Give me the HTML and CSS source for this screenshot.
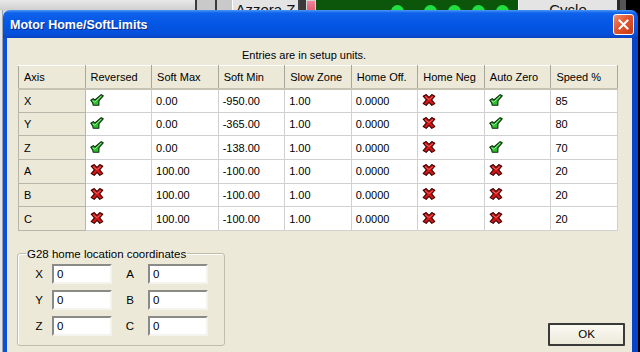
FILE: index.html
```html
<!DOCTYPE html>
<html lang="en">
<head>
    <meta charset="UTF-8">
    <title>Motor Home/SoftLimits</title>
    <link rel="stylesheet" href="styles.css">
</head>
<body>
    <!-- application behind the dialog -->
    <div class="desktop">
        <div class="bg-panel"></div>
        <div class="bg-sep"></div>
        <div class="bg-gap"></div>
        <div class="bg-sep"></div>
        <div class="bg-gap narrow"></div>
        <div class="bg-button">Azzera Z</div>
        <div class="bg-led"></div>
        <div class="bg-dro">
            <span class="dot first"></span>
            <span class="dot"></span>
            <span class="dot"></span>
            <span class="dot"></span>
            <span class="dot"></span>
        </div>
        <div class="bg-button wide">Cycle</div>
        <div class="bg-dark"></div>
    </div>

    <div class="stage">
        <div class="edge-left"></div>

        <div class="window">
            <div class="titlebar">
                <span class="title">Motor Home/SoftLimits</span>
                <button class="close" type="button">
                    <svg width="11" height="11" viewBox="0 0 11 11">
                        <path d="M1.5 1.5 L9.5 9.5 M9.5 1.5 L1.5 9.5" stroke="#ffffff" stroke-width="2" stroke-linecap="square"/>
                    </svg>
                </button>
            </div>

            <div class="frame">
                <p class="caption">Entries are in setup units.</p>

                <table class="limits">
                    <thead>
                        <tr>
                            <th>Axis</th>
                            <th>Reversed</th>
                            <th>Soft Max</th>
                            <th>Soft Min</th>
                            <th>Slow Zone</th>
                            <th>Home Off.</th>
                            <th>Home Neg</th>
                            <th>Auto Zero</th>
                            <th>Speed %</th>
                        </tr>
                    </thead>
                    <tbody>
                        <tr>
                            <td class="axis">X</td>
                            <td><svg class="ico"><use href="#yes"/></svg></td>
                            <td>0.00</td>
                            <td>-950.00</td>
                            <td>1.00</td>
                            <td>0.0000</td>
                            <td><svg class="ico"><use href="#no"/></svg></td>
                            <td><svg class="ico"><use href="#yes"/></svg></td>
                            <td>85</td>
                        </tr>
                        <tr>
                            <td class="axis">Y</td>
                            <td><svg class="ico"><use href="#yes"/></svg></td>
                            <td>0.00</td>
                            <td>-365.00</td>
                            <td>1.00</td>
                            <td>0.0000</td>
                            <td><svg class="ico"><use href="#no"/></svg></td>
                            <td><svg class="ico"><use href="#yes"/></svg></td>
                            <td>80</td>
                        </tr>
                        <tr>
                            <td class="axis">Z</td>
                            <td><svg class="ico"><use href="#yes"/></svg></td>
                            <td>0.00</td>
                            <td>-138.00</td>
                            <td>1.00</td>
                            <td>0.0000</td>
                            <td><svg class="ico"><use href="#no"/></svg></td>
                            <td><svg class="ico"><use href="#yes"/></svg></td>
                            <td>70</td>
                        </tr>
                        <tr>
                            <td class="axis">A</td>
                            <td><svg class="ico"><use href="#no"/></svg></td>
                            <td>100.00</td>
                            <td>-100.00</td>
                            <td>1.00</td>
                            <td>0.0000</td>
                            <td><svg class="ico"><use href="#no"/></svg></td>
                            <td><svg class="ico"><use href="#no"/></svg></td>
                            <td>20</td>
                        </tr>
                        <tr>
                            <td class="axis">B</td>
                            <td><svg class="ico"><use href="#no"/></svg></td>
                            <td>100.00</td>
                            <td>-100.00</td>
                            <td>1.00</td>
                            <td>0.0000</td>
                            <td><svg class="ico"><use href="#no"/></svg></td>
                            <td><svg class="ico"><use href="#no"/></svg></td>
                            <td>20</td>
                        </tr>
                        <tr>
                            <td class="axis">C</td>
                            <td><svg class="ico"><use href="#no"/></svg></td>
                            <td>100.00</td>
                            <td>-100.00</td>
                            <td>1.00</td>
                            <td>0.0000</td>
                            <td><svg class="ico"><use href="#no"/></svg></td>
                            <td><svg class="ico"><use href="#no"/></svg></td>
                            <td>20</td>
                        </tr>
                    </tbody>
                </table>

                <div class="bottom">
                    <fieldset class="group">
                        <legend>G28 home location coordinates</legend>
                        <div class="coords">
                            <label for="g28x">X</label><input id="g28x" type="text" value="0">
                            <label for="g28a">A</label><input id="g28a" type="text" value="0">
                            <label for="g28y">Y</label><input id="g28y" type="text" value="0">
                            <label for="g28b">B</label><input id="g28b" type="text" value="0">
                            <label for="g28z">Z</label><input id="g28z" type="text" value="0">
                            <label for="g28c">C</label><input id="g28c" type="text" value="0">
                        </div>
                    </fieldset>
                    <button class="ok" type="button">OK</button>
                </div>
            </div>
        </div>

        <div class="edge-right"></div>
    </div>

    <!-- icon symbols -->
    <svg class="defs" width="0" height="0">
        <symbol id="yes" viewBox="0 0 14 12">
            <path d="M0.8 6.2 L3.2 4.6 L5 6 L11.2 0.6 L13.2 1.8 L9 6.6 L8.8 11.2 L3.2 11.2 L2.6 8.6 Z" fill="#2fbf2f" stroke="#0a2e0a" stroke-width="1.1" stroke-linejoin="round"/>
            <path d="M2.6 7 L4.8 8.2 L11 2.2" fill="none" stroke="#9ff09a" stroke-width="0.9"/>
        </symbol>
        <symbol id="no" viewBox="0 0 14 12">
            <path d="M1.2 2.2 L4.2 0.6 L7 3.4 L9.8 0.6 L12.8 2.2 L9.6 5.8 L12.8 9.6 L9.8 11.4 L7 8.4 L4.2 11.4 L1.2 9.6 L4.4 5.8 Z" fill="#d41616" stroke="#3c0000" stroke-width="1.1" stroke-linejoin="round"/>
            <path d="M3 2.6 L7 5.6 L11 2.6" fill="none" stroke="#f27070" stroke-width="0.8"/>
        </symbol>
    </svg>
</body>
</html>
```

FILE: styles.css
```css
/* reset */
* {
    margin: 0;
    padding: 0;
    box-sizing: border-box;
}

body {
    width: 640px;
    height: 352px;
    overflow: hidden;
    background-color: #000000;
    font-family: "Liberation Sans", Arial, sans-serif;
    font-size: 11px;
    color: #000000;
}

/* strip of the program behind the dialog */
.desktop {
    display: flex;
    height: 10px;
    overflow: hidden;
    background-color: #d6d6d6;
}

.bg-panel {
    width: 195px;
    background: linear-gradient(#e9e9e9, #cfcfcf);
}

.bg-sep {
    width: 2px;
    background-color: #3a3a3a;
}

.bg-gap {
    width: 18px;
    background-color: #c9c9c9;
}

.bg-gap.narrow {
    width: 15px;
}

.bg-button {
    width: 68px;
    background-color: #e4e4e4;
    border-left: 1px solid #ffffff;
    border-right: 2px solid #404040;
    font-size: 15px;
    line-height: 14px;
    padding-top: 3px;
    text-align: center;
    color: #111111;
}

.bg-button.wide {
    width: 102px;
    border-right: 3px solid #2a2a2a;
}

.bg-led {
    width: 16px;
    background-color: #3a3a3a;
    border-left: 6px solid #3a3a3a;
    background-image: linear-gradient(#f08aa0, #e06078);
    background-clip: content-box;
    padding: 1px 1px 0 1px;
}

.bg-dro {
    display: flex;
    gap: 11px;
    width: 202px;
    padding-left: 75px;
    padding-top: 5px;
    background-color: #0b560b;
}

.dot {
    width: 13px;
    height: 13px;
    border-radius: 50%;
    background-color: #20e040;
}

.dot.first {
    margin-right: 9px;
}

.bg-dark {
    flex: 1;
    background: linear-gradient(90deg, #555555 0 6px, #000000 6px);
}

/* row holding the dialog */
.stage {
    display: flex;
    height: 342px;
    background: linear-gradient(90deg, #d8d8d8 0 320px, #000000 320px);
}

.edge-left {
    width: 3px;
    background-color: #e2e6ea;
    border-right: 1px solid #9aa4b0;
}

.edge-right {
    width: 2px;
    background-color: #000000;
}

/* XP dialog */
.window {
    display: flex;
    flex-direction: column;
    width: 635px;
}

.titlebar {
    display: flex;
    align-items: center;
    justify-content: space-between;
    height: 28px;
    padding: 0 4px 0 7px;
    border-radius: 7px 7px 0 0;
    background: linear-gradient(#4a98f8 0, #0f62ea 3px, #0557e6 45%, #0350dc 85%, #0a44c0 100%);
}

.title {
    color: #ffffff;
    font-weight: bold;
    font-size: 12.5px;
    text-shadow: 1px 1px 0 #0a2c88;
    padding-top: 2px;
}

.close {
    display: flex;
    align-items: center;
    justify-content: center;
    width: 21px;
    height: 21px;
    border: 1px solid #ffffff;
    border-radius: 3px;
    background: linear-gradient(135deg, #f09070 0%, #e2552e 45%, #c43a16 100%);
}

.frame {
    flex: 1;
    background-color: #ece9d8;
    border-left: 4px solid #0a50d8;
    border-right: 6px solid #0744c8;
}

.caption {
    padding: 11px 0 0 235px;
    line-height: 13px;
    margin-bottom: 3px;
}

/* grid of limits */
.limits {
    width: 600px;
    margin-left: 11px;
    border-collapse: collapse;
    table-layout: fixed;
    border: 1px solid #a7a6a0;
    border-top-color: #8c8b86;
    border-left-color: #8c8b86;
    background-color: #ffffff;
}

.limits th {
    height: 23px;
    padding-left: 5px;
    text-align: left;
    font-weight: normal;
    background-color: #ece9d8;
    border: 1px solid #a9a79c;
    border-top-color: #ffffff;
    border-bottom: 2px solid #c6c3b2;
}

.limits td {
    height: 23.67px;
    padding-left: 4px;
    border: 1px solid #d0d0d0;
    vertical-align: middle;
}

.limits td.axis {
    padding-left: 5px;
    background-color: #ece9d8;
    border-color: #b8b6aa;
}

.ico {
    display: block;
    width: 14px;
    height: 12px;
    margin-left: 0;
    margin-top: -2px;
}

.defs {
    position: absolute;
}

/* bottom area */
.bottom {
    display: flex;
    justify-content: space-between;
    align-items: flex-end;
    margin-top: 16px;
    padding: 0 7px 0 10px;
}

.group {
    width: 208px;
    padding: 3px 16px 9px 8px;
    border: 1px solid #c0bdac;
    border-radius: 3px;
    box-shadow: inset 1px 1px 0 #ffffff;
}

.group legend {
    padding: 0 1px;
    line-height: 14px;
    font-size: 11.5px;
}

.coords {
    display: grid;
    grid-template-columns: 26px 60px 36px 60px;
    row-gap: 6px;
    align-items: center;
}

.coords label {
    text-align: center;
    font-size: 11.5px;
}

.coords input {
    width: 60px;
    height: 20px;
    padding-left: 3px;
    font-family: "Liberation Sans", Arial, sans-serif;
    font-size: 11.5px;
    background-color: #ffffff;
    border: 2px solid #f4f3ee;
    border-top-color: #8a8a86;
    border-left-color: #8a8a86;
}

.ok {
    width: 77px;
    height: 23px;
    font-family: "Liberation Sans", Arial, sans-serif;
    font-size: 11.5px;
    color: #000000;
    background: linear-gradient(#fbfaf4, #ece9d8);
    border: 2px solid #3a3a38;
    border-radius: 1px;
}
```
